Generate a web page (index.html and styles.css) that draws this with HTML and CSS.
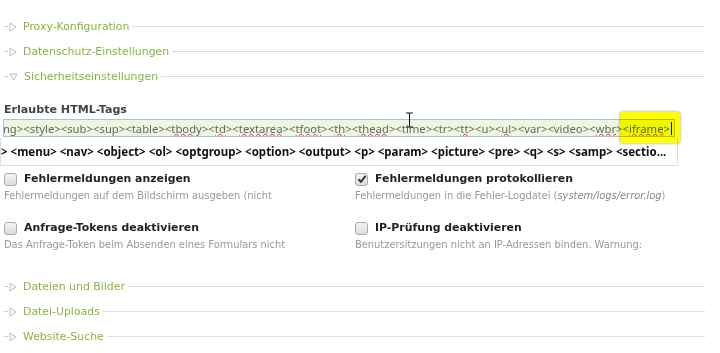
FILE: index.html
```html
<!DOCTYPE html>
<html lang="de">
<head>
  <meta charset="UTF-8">
  <title>Einstellungen</title>
  <link rel="stylesheet" href="styles.css">
</head>
<body>
  <div class="settings">
    <!-- collapsed groups -->
    <div class="legend"><span class="dash"></span><svg class="tri" width="8" height="10" viewBox="0 0 8 10"><polygon points="1,1 7,5 1,9" /></svg><span class="legend-text">Proxy-Konfiguration</span><span class="rule"></span></div>
    <div class="legend"><span class="dash"></span><svg class="tri" width="8" height="10" viewBox="0 0 8 10"><polygon points="1,1 7,5 1,9" /></svg><span class="legend-text">Datenschutz-Einstellungen</span><span class="rule"></span></div>
    <div class="legend"><span class="dash"></span><svg class="tri" width="9" height="10" viewBox="0 0 9 10"><polygon points="1,2 8,2 4.5,8" /></svg><span class="legend-text">Sicherheitseinstellungen</span><span class="rule"></span></div>

    <!-- open group -->
    <div class="group">
      <h3 class="field-title">Erlaubte HTML-Tags</h3>
      <div class="tag-input">
        <div class="tag-text">&lt;small&gt;&lt;span&gt;&lt;strong&gt;&lt;style&gt;&lt;sub&gt;&lt;sup&gt;&lt;table&gt;&lt;<span class="typo">tbody</span>&gt;&lt;<span class="typo">td</span>&gt;&lt;<span class="typo">textarea</span>&gt;&lt;<span class="typo">tfoot</span>&gt;&lt;<span class="typo">th</span>&gt;&lt;<span class="typo">thead</span>&gt;&lt;time&gt;&lt;tr&gt;&lt;<span class="typo">tt</span>&gt;&lt;u&gt;&lt;<span class="typo">ul</span>&gt;&lt;var&gt;&lt;video&gt;&lt;<span class="typo">wbr</span>&gt;&lt;<span class="typo">iframe</span>&gt;<span class="caret"></span></div>
      </div>
      <div class="suggest">&gt; &lt;menu&gt; &lt;nav&gt; &lt;object&gt; &lt;ol&gt; &lt;optgroup&gt; &lt;option&gt; &lt;output&gt; &lt;p&gt; &lt;param&gt; &lt;picture&gt; &lt;pre&gt; &lt;q&gt; &lt;s&gt; &lt;samp&gt; &lt;sectio...</div>

      <div class="checks">
        <div class="check">
          <label><span class="box"></span>Fehlermeldungen anzeigen</label>
          <p class="help">Fehlermeldungen auf dem Bildschirm ausgeben (nicht</p>
        </div>
        <div class="check">
          <label><span class="box checked"><svg width="10" height="10" viewBox="0 0 10 10"><path d="M1.5 5.2 L4 7.8 L8.6 1.8" /></svg></span>Fehlermeldungen protokollieren</label>
          <p class="help">Fehlermeldungen in die Fehler-Logdatei (<em>system/logs/error.log</em>)</p>
        </div>
        <div class="check">
          <label><span class="box"></span>Anfrage-Tokens deaktivieren</label>
          <p class="help">Das Anfrage-Token beim Absenden eines Formulars nicht</p>
        </div>
        <div class="check">
          <label><span class="box"></span>IP-Prüfung deaktivieren</label>
          <p class="help">Benutzersitzungen nicht an IP-Adressen binden. Warnung:</p>
        </div>
      </div>
    </div>

    <div class="legend"><span class="dash"></span><svg class="tri" width="8" height="10" viewBox="0 0 8 10"><polygon points="1,1 7,5 1,9" /></svg><span class="legend-text">Dateien und Bilder</span><span class="rule"></span></div>
    <div class="legend"><span class="dash"></span><svg class="tri" width="8" height="10" viewBox="0 0 8 10"><polygon points="1,1 7,5 1,9" /></svg><span class="legend-text">Datei-Uploads</span><span class="rule"></span></div>
    <div class="legend"><span class="dash"></span><svg class="tri" width="8" height="10" viewBox="0 0 8 10"><polygon points="1,1 7,5 1,9" /></svg><span class="legend-text">Website-Suche</span><span class="rule"></span></div>

    <!-- overlays from the screenshot -->
    <div class="highlight"></div>
    <svg class="ibeam" width="9" height="16" viewBox="0 0 9 16"><path d="M1 1 H8 M4.5 1 V15 M1 15 H8" /></svg>
  </div>
</body>
</html>
```

FILE: styles.css
```css
/* Base */
body {
  margin: 0;
  background: #fff;
  font-family: "DejaVu Sans", Verdana, sans-serif;
  color: #222;
}

.settings {
  position: relative;
  width: 705px;
  padding-top: 14px;
}

/* Legend rows */
.legend {
  display: flex;
  align-items: center;
  height: 25px;
  padding-left: 4px;
}

.dash {
  width: 4px;
  height: 1px;
  background: #ccc;
}

.tri {
  margin: 0 6px 0 1px;
}

.tri polygon {
  fill: none;
  stroke: #bbb;
  stroke-width: 1;
}

.legend-text {
  font-size: 10.9px;
  color: #8ab43c;
  margin-right: 3px;
}

.rule {
  flex: 1;
  height: 1px;
  background: #ddd;
}

/* Open group */
.group {
  padding-bottom: 22px;
}

.field-title {
  margin: 14px 0 2px 4px;
  font-size: 11.1px;
  line-height: 14px;
  color: #444;
}

.tag-input {
  margin-left: 3px;
  width: 668px;
  height: 16px;
  border: 1px solid #a9c0e2;
  background: #eef7dd;
  overflow: hidden;
  display: flex;
  justify-content: flex-end;
  padding-right: 2px;
}

.tag-text {
  white-space: nowrap;
  font-family: "Noto Sans", sans-serif;
  font-size: 11.3px;
  line-height: 17px;
  color: #666;
}

.typo {
  text-decoration: underline wavy #e23;
  text-decoration-thickness: 1px;
  text-underline-offset: 0;
}

.caret {
  display: inline-block;
  width: 1px;
  height: 13px;
  background: #111;
  vertical-align: -2px;
  margin-left: 1px;
}

.suggest {
  width: 676px;
  height: 27px;
  border: 1px solid #ddd;
  border-top: none;
  white-space: nowrap;
  overflow: hidden;
  font-family: "Noto Sans", sans-serif;
  font-weight: bold;
  font-size: 11.5px;
  line-height: 27px;
  color: #111;
  margin-top: 1px;
}

/* Checkbox grid */
.checks {
  display: grid;
  grid-template-columns: 351px 1fr;
  row-gap: 17px;
  padding: 5px 0 0 4px;
}

.check label {
  display: flex;
  align-items: center;
  font-weight: bold;
  font-size: 10.9px;
  line-height: 16px;
  color: #222;
}

.box {
  width: 11px;
  height: 11px;
  border: 1px solid #aaa;
  border-radius: 3px;
  background: linear-gradient(#f4f4f4, #dcdcdc);
  margin-right: 7px;
  display: flex;
  align-items: center;
  justify-content: center;
}

.box path {
  fill: none;
  stroke: #333;
  stroke-width: 2;
}

.help {
  margin: 2px 0 0;
  font-size: 9.9px;
  line-height: 14px;
  color: #999;
}

.help em {
  color: #888;
}

/* Overlays */
.highlight {
  position: absolute;
  left: 620px;
  top: 112px;
  width: 60px;
  height: 31px;
  background: #ffff00;
  mix-blend-mode: multiply;
  border-radius: 2px;
  box-shadow: 0 0 3px rgba(110, 110, 0, 0.7);
  pointer-events: none;
}

.ibeam {
  position: absolute;
  left: 405px;
  top: 112px;
}

.ibeam path {
  fill: none;
  stroke: #111;
  stroke-width: 1;
}
```
